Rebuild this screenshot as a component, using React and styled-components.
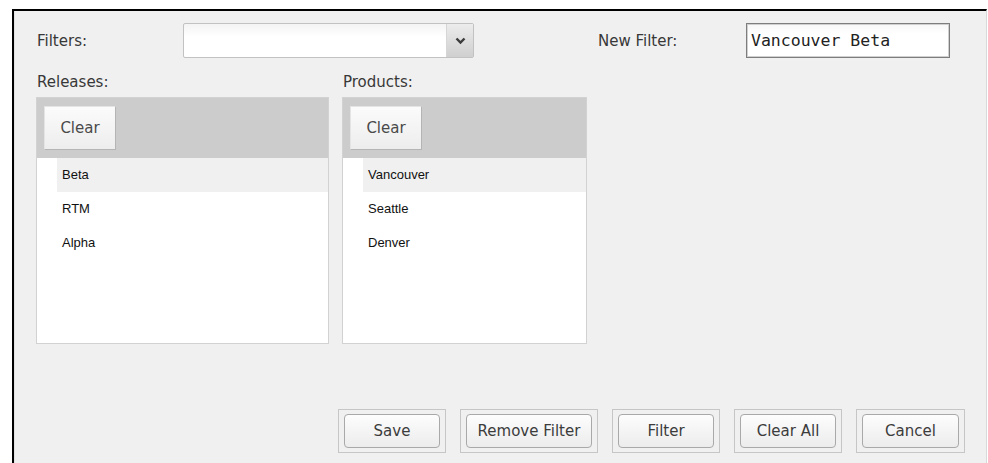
import styled, { createGlobalStyle } from 'styled-components'

const GlobalStyle = createGlobalStyle`
  html, body {
    margin: 0;
    padding: 0;
    background: #fff;
  }
`

const Window = styled.div`
  box-sizing: border-box;
  margin: 9px 0 0 12px;
  width: 975px;
  height: 454px;
  background: #f0f0f0;
  border-top: 2px solid #000;
  border-left: 2px solid #000;
  border-right: 1px solid #d9d9d9;
  box-shadow: inset 1px 0 0 #e2e2e2;
  padding: 12px 21px 10px 22px;
  display: flex;
  flex-direction: column;
  font-family: 'DejaVu Sans', Verdana, sans-serif;
  font-size: 15px;
  color: #383838;
`

const TopRow = styled.div`
  display: flex;
  align-items: center;
  height: 35px;
`

const Label = styled.span`
  display: block;
  width: ${(p) => p.width || 'auto'};
  line-height: 20px;
  padding-left: 1px;
`

const Select = styled.div`
  box-sizing: border-box;
  width: 291px;
  height: 35px;
  display: flex;
  border: 1px solid #c2c2c2;
  border-radius: 2px;
  background: linear-gradient(#f4f4f4, #fff 40%);
  margin-right: 123px;
`

const SelectValue = styled.div`
  flex: 1;
`

const SelectArrow = styled.div`
  width: 26px;
  display: flex;
  align-items: center;
  justify-content: center;
  border-left: 1px solid #d6d6d6;
  background: linear-gradient(#ececec, #cfcfcf);
`

const TextInput = styled.input`
  box-sizing: border-box;
  width: 204px;
  height: 35px;
  margin: 0;
  border: 1px solid #7d7d7d;
  box-shadow: inset 0 0 0 1px #d0d0d0;
  background: linear-gradient(#f7f7f7, #fff 30%);
  padding: 0 4px;
  font-family: 'DejaVu Sans Mono', 'Liberation Mono', monospace;
  font-size: 16.5px;
  color: #222;
  outline: none;
`

const Columns = styled.div`
  display: flex;
  gap: 13px;
  margin-top: 14px;
`

const Column = styled.div`
  display: flex;
  flex-direction: column;
`

const ListBox = styled.div`
  box-sizing: border-box;
  width: ${(p) => p.width}px;
  height: 247px;
  margin-top: 5px;
  border: 1px solid #d2d2d2;
  background: #fff;
`

const ListHeader = styled.div`
  background: #cccccc;
  padding: 8px 7px;
`

const ClearButton = styled.button`
  box-sizing: border-box;
  width: 72px;
  height: 44px;
  border: 1px solid #b4b4b4;
  border-top-color: #e4e4e4;
  border-left-color: #e4e4e4;
  background: linear-gradient(#fbfbfb, #ededed);
  font-family: 'DejaVu Sans', Verdana, sans-serif;
  font-size: 15px;
  color: #4a4a4a;
  padding: 0;
`

const ListItem = styled.div`
  height: 34px;
  line-height: 34px;
  margin-left: 20px;
  padding-left: 5px;
  font-family: 'Liberation Sans', Arial, sans-serif;
  font-size: 13px;
  color: #111;
  background: ${(p) => (p.selected ? '#f0f0f0' : 'transparent')};
`

const ActionBar = styled.div`
  margin-top: auto;
  display: flex;
  justify-content: flex-end;
  gap: 14px;
`

const ButtonFrame = styled.div`
  box-sizing: border-box;
  width: ${(p) => p.width}px;
  height: 44px;
  padding: 4px 5px;
  border: 1px solid #c6c6c6;
`

const ActionButton = styled.button`
  box-sizing: border-box;
  width: 100%;
  height: 100%;
  border: 1px solid #a9a9a9;
  border-radius: 4px;
  background: linear-gradient(#fdfdfd, #ececec);
  font-family: 'DejaVu Sans', Verdana, sans-serif;
  font-size: 15px;
  color: #3c3c3c;
  padding: 0;
`

const Chevron = () => (
  <svg width="11" height="8" viewBox="0 0 11 8">
    <path d="M1.5 1.5 L5.5 5.5 L9.5 1.5" fill="none" stroke="#3a3a3a" strokeWidth="2.4" />
  </svg>
)

const lists = [
  { title: 'Releases:', width: 293, items: ['Beta', 'RTM', 'Alpha'] },
  { title: 'Products:', width: 245, items: ['Vancouver', 'Seattle', 'Denver'] },
]

const actions = [
  { label: 'Save', width: 108 },
  { label: 'Remove Filter', width: 138 },
  { label: 'Filter', width: 108 },
  { label: 'Clear All', width: 108 },
  { label: 'Cancel', width: 109 },
]

function App() {
  return (
    <>
      <GlobalStyle />
      <Window>
        <TopRow>
          <Label width="146px">Filters:</Label>
          <Select>
            <SelectValue />
            <SelectArrow>
              <Chevron />
            </SelectArrow>
          </Select>
          <Label width="148px">New Filter:</Label>
          <TextInput defaultValue="Vancouver Beta" />
        </TopRow>

        <Columns>
          {lists.map((list) => (
            <Column key={list.title}>
              <Label>{list.title}</Label>
              <ListBox width={list.width}>
                <ListHeader>
                  <ClearButton>Clear</ClearButton>
                </ListHeader>
                {list.items.map((item, i) => (
                  <ListItem key={item} selected={i === 0}>
                    {item}
                  </ListItem>
                ))}
              </ListBox>
            </Column>
          ))}
        </Columns>

        <ActionBar>
          {actions.map((a) => (
            <ButtonFrame key={a.label} width={a.width}>
              <ActionButton>{a.label}</ActionButton>
            </ButtonFrame>
          ))}
        </ActionBar>
      </Window>
    </>
  )
}

export default App
